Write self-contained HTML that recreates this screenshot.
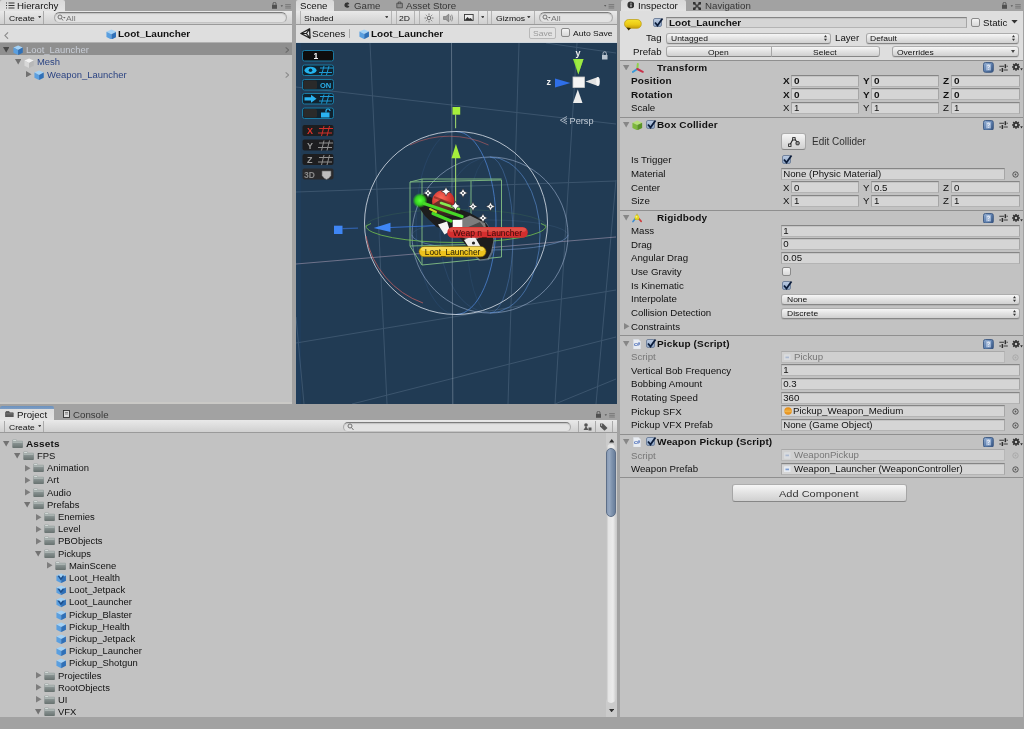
<!DOCTYPE html><html><head><meta charset="utf-8"><title>Unity</title><style>
*{box-sizing:border-box;margin:0;padding:0}
html,body{width:1024px;height:729px;overflow:hidden;background:#a2a2a2;-webkit-font-smoothing:antialiased;font-family:"Liberation Sans",sans-serif;font-size:9.7px;color:#111}
.abs{position:absolute}
.t{position:absolute;white-space:nowrap;line-height:12px;height:12px;transform:scaleY(.9);transform-origin:0 50%;color:#111}
.b{font-weight:bold;font-size:10px;letter-spacing:.15px}
.panel{position:absolute;background:#c2c2c2}
.tabbar{position:absolute;background:#a2a2a2}
.tab{position:absolute;background:linear-gradient(#d9d9d9,#e2e2e2);border-top-left-radius:2px;border-top-right-radius:2px}
.tbar{position:absolute;background:linear-gradient(#e9e9e9,#d0d0d0);border-bottom:1px solid #9a9a9a}
.fld{position:absolute;background:#d5d5d5;border:1px solid #a6a6a6;border-top-color:#858585;border-bottom-color:#b4b4b4;height:12.4px;box-shadow:inset 0 1px 0 #c4c4c4}
.fld.dis{background:#d0d0d0;border-color:#b7b7b7;border-top-color:#a9a9a9;box-shadow:none}
.dd{position:absolute;background:linear-gradient(#f6f6f6,#e4e4e4 45%,#d0d0d0);border:1px solid #a6a6a6;border-top-color:#adadad;border-bottom-color:#868686;border-radius:3px;height:11px;box-shadow:0 1px 0 rgba(0,0,0,.08)}
.btn{position:absolute;background:linear-gradient(#f6f6f6,#e4e4e4 45%,#d0d0d0);border:1px solid #a6a6a6;border-top-color:#adadad;border-bottom-color:#868686;border-radius:3px}
.sep{position:absolute;left:620px;width:403px;height:1px;background:#8f8f8f}
.cb{position:absolute;width:9px;height:9px;border:1px solid #8a8a8a;border-radius:2px;background:linear-gradient(#f4f4f4,#d8d8d8)}
.cb.on{background:linear-gradient(#b9c9e0,#8fa7c8);border-color:#72839d}
.nb{letter-spacing:0}
.s{font-size:8.6px}
.tr{font-size:9.45px}
.gray{color:#777}
.blue{color:#2b4382}
</style></head><body><div id="root" style="position:absolute;left:0;top:0;width:1024px;height:729px;will-change:transform">
<svg width="0" height="0" style="position:absolute"><defs><linearGradient id="hb" x1="0" y1="0" x2="1" y2="1"><stop offset="0" stop-color="#9ab4d6"/><stop offset="0.5" stop-color="#5d7fae"/><stop offset="1" stop-color="#34527f"/></linearGradient><linearGradient id="fg" x1="0" y1="0" x2="0" y2="1"><stop offset="0" stop-color="#9ea7a5"/><stop offset="0.45" stop-color="#879190"/><stop offset="1" stop-color="#687270"/></linearGradient></defs></svg>
<div class="panel" style="left:0;top:0;width:292px;height:404px"></div>
<div class="tabbar" style="left:0;top:0;width:292px;height:11px"></div>
<div class="tab" style="left:0;top:0;width:65px;height:11px"></div>
<svg class="abs" style="left:6px;top:2px" width="9" height="7" viewBox="0 0 9 7"><path d="M0 1h1M2.5 1h6M0 3.5h1M2.5 3.5h6M0 6h1M2.5 6h6" stroke="#333" stroke-width="1"/></svg>
<div class="t " style="left:17px;top:-0.5px;">Hierarchy</div>
<div class="tbar" style="left:0;top:11px;width:292px;height:14px"></div>
<div class="abs" style="left:4px;top:11px;width:1px;height:13px;background:#aaa"></div>
<div class="abs" style="left:43px;top:11px;width:1px;height:13px;background:#aaa"></div>
<div class="t s" style="left:9px;top:12px;">Create</div>
<svg class="abs" style="left:37.8px;top:15.8px" width="3.4" height="2.4" viewBox="0 0 4 3"><path d="M0 0L4 0L2 3Z" fill="#444"/></svg>
<div class="abs" style="left:53.5px;top:12px;width:233.5px;height:10.6px;border:1px solid #a9a9a9;border-top-color:#7c7c7c;border-bottom-color:#c4c4c4;border-radius:5.5px;background:#e2e2e2;box-shadow:inset 0 1px 1px #c2c2c2"></div>
<div class="t gray s" style="left:66px;top:12px;">All</div>
<svg class="abs" style="left:57px;top:14px" width="9" height="8" viewBox="0 0 9 8"><circle cx="3" cy="3" r="2" fill="none" stroke="#666" stroke-width="0.9"/><path d="M4.5 4.5L6 6.5" stroke="#666" stroke-width="0.9"/><path d="M6 3L8.6 3L7.3 4.6Z" fill="#666"/></svg>
<div class="abs" style="left:0;top:25px;width:292px;height:18px;background:#dedede;border-bottom:1px solid #b0b0b0"></div>
<svg class="abs" style="left:4.2px;top:31.5px" width="4.5" height="7.2" viewBox="0 0 5 8"><path d="M4.5 0.5L1 4L4.5 7.5" fill="none" stroke="#8a8a8a" stroke-width="1.2"/></svg>
<svg class="abs" style="left:105.7px;top:28.6px" width="10.8" height="10.8" viewBox="0 0 12 12"><path d="M6 0.5 L11.5 3 L6 5.8 L0.5 3 Z" fill="#a4d2f6"/><path d="M0.5 3 L6 5.8 L6 11.7 L0.5 9 Z" fill="#5a9fe0"/><path d="M11.5 3 L6 5.8 L6 11.7 L11.5 9 Z" fill="#2f70b8"/></svg>
<div class="t b nb" style="left:118px;top:28px;">Loot_Launcher</div>
<div class="abs" style="left:0;top:43px;width:292px;height:12px;background:#8f8f8f"></div>
<svg class="abs" style="left:3px;top:47.4px" width="6.4" height="5.5" viewBox="0 0 7 6"><path d="M0 0 L7 0 L3.5 6 Z" fill="#484848"/></svg>
<svg class="abs" style="left:13.2px;top:45.4px" width="10.2" height="10.2" viewBox="0 0 12 12"><path d="M6 0.5 L11.5 3 L6 5.8 L0.5 3 Z" fill="#a4d2f6"/><path d="M0.5 3 L6 5.8 L6 11.7 L0.5 9 Z" fill="#5a9fe0"/><path d="M11.5 3 L6 5.8 L6 11.7 L11.5 9 Z" fill="#2f70b8"/></svg>
<div class="t tr" style="left:26px;top:43.5px;color:#c8cdd6">Loot_Launcher</div>
<svg class="abs" style="left:284.5px;top:46.8px" width="4.4" height="6" viewBox="0 0 5 7"><path d="M0.7 0.5L4.2 3.5L0.7 6.5" fill="none" stroke="#6a6a6a" stroke-width="1.3"/></svg>
<svg class="abs" style="left:14.6px;top:59.3px" width="6.4" height="5.5" viewBox="0 0 7 6"><path d="M0 0 L7 0 L3.5 6 Z" fill="#707070"/></svg>
<svg class="abs" style="left:23.8px;top:57.5px" width="10.2" height="10.2" viewBox="0 0 12 12"><path d="M6 0.5 L11.5 3 L6 5.8 L0.5 3 Z" fill="#f2f2f2"/><path d="M0.5 3 L6 5.8 L6 11.7 L0.5 9 Z" fill="#d8d8d8"/><path d="M11.5 3 L6 5.8 L6 11.7 L11.5 9 Z" fill="#b8b8b8"/></svg>
<div class="t blue tr" style="left:37px;top:56px;">Mesh</div>
<svg class="abs" style="left:26px;top:71px" width="5.5" height="6.4" viewBox="0 0 6 7"><path d="M0 0 L6 3.5 L0 7 Z" fill="#707070"/></svg>
<svg class="abs" style="left:34.2px;top:69.6px" width="10.2" height="10.2" viewBox="0 0 12 12"><path d="M6 0.5 L11.5 3 L6 5.8 L0.5 3 Z" fill="#a4d2f6"/><path d="M0.5 3 L6 5.8 L6 11.7 L0.5 9 Z" fill="#5a9fe0"/><path d="M11.5 3 L6 5.8 L6 11.7 L11.5 9 Z" fill="#2f70b8"/></svg>
<div class="t blue tr" style="left:47px;top:68.5px;">Weapon_Launcher</div>
<svg class="abs" style="left:284.5px;top:71.5px" width="4.4" height="6" viewBox="0 0 5 7"><path d="M0.7 0.5L4.2 3.5L0.7 6.5" fill="none" stroke="#8c8c8c" stroke-width="1.3"/></svg>
<svg class="abs" style="left:272px;top:1.8px" width="19" height="7" viewBox="0 0 19 7"><rect x="0" y="2.8" width="5" height="4" fill="#505050"/><path d="M1 2.8V1.8a1.5 1.5 0 0 1 3 0V2.8" fill="none" stroke="#505050" stroke-width="0.9"/><path d="M8.6 3.2L11 3.2L9.8 4.9Z" fill="#5a5a5a"/><path d="M13.2 2.6h5.6M13.2 4.3h5.6M13.2 6h5.6" stroke="#747474" stroke-width="0.9"/></svg>
<div class="abs" style="left:0;top:402px;width:292px;height:2px;background:#cac9c6"></div>
<div class="panel" style="left:296px;top:0;width:321px;height:404px"></div>
<div class="tabbar" style="left:292px;top:0;width:328px;height:11px"></div>
<div class="tab" style="left:296px;top:0;width:38px;height:11px"></div>
<div class="t " style="left:300px;top:-0.5px;">Scene</div>
<div class="t " style="left:354px;top:-0.5px;color:#363636">Game</div>
<svg class="abs" style="left:344.2px;top:2.2px" width="6" height="6" viewBox="0 0 8 8"><path d="M4 0.5a3.5 3.5 0 1 0 3.2 5L4 4L7.2 2.5A3.5 3.5 0 0 0 4 0.5Z" fill="#333"/></svg>
<svg class="abs" style="left:395.6px;top:1.4px" width="7.2" height="7.2" viewBox="0 0 9 9"><path d="M1 2.8h7v5.7h-7z" fill="#8e8e8e" stroke="#505050" stroke-width="1.1"/><path d="M3 4V1.2h3V4" fill="none" stroke="#505050" stroke-width="1.1"/></svg>
<div class="t " style="left:406px;top:-0.5px;color:#363636">Asset Store</div>
<svg class="abs" style="left:603.6px;top:3.6px" width="11" height="5" viewBox="0 0 11 5"><path d="M0 1L2.4 1L1.2 2.7Z" fill="#5a5a5a"/><path d="M4.6 0.6h5.6M4.6 2.300h5.6M4.6 4h5.6" stroke="#747474" stroke-width="0.9"/></svg>
<div class="tbar" style="left:296px;top:11px;width:321px;height:14px"></div>
<div class="t s" style="left:304px;top:12px;">Shaded</div>
<svg class="abs" style="left:384.8px;top:15.6px" width="3.6" height="2.6" viewBox="0 0 4 3"><path d="M0 0L4 0L2 3Z" fill="#444"/></svg>
<div class="abs" style="left:300px;top:11px;width:1px;height:13px;background:#b4b4b4"></div>
<div class="abs" style="left:390.8px;top:11px;width:1px;height:13px;background:#b4b4b4"></div>
<div class="abs" style="left:395.5px;top:11px;width:1px;height:13px;background:#b4b4b4"></div>
<div class="abs" style="left:414px;top:11px;width:1px;height:13px;background:#b4b4b4"></div>
<div class="abs" style="left:419px;top:11px;width:1px;height:13px;background:#b4b4b4"></div>
<div class="abs" style="left:438.5px;top:11px;width:1px;height:13px;background:#b4b4b4"></div>
<div class="abs" style="left:458px;top:11px;width:1px;height:13px;background:#b4b4b4"></div>
<div class="abs" style="left:478px;top:11px;width:1px;height:13px;background:#b4b4b4"></div>
<div class="abs" style="left:486.5px;top:11px;width:1px;height:13px;background:#b4b4b4"></div>
<div class="abs" style="left:491px;top:11px;width:1px;height:13px;background:#b4b4b4"></div>
<div class="abs" style="left:534px;top:11px;width:1px;height:13px;background:#b4b4b4"></div>
<div class="t s" style="left:399px;top:12px;">2D</div>
<svg class="abs" style="left:424px;top:13.3px" width="10" height="10" viewBox="0 0 10 10"><circle cx="5" cy="5" r="1.8" fill="none" stroke="#555" stroke-width="0.9"/><path d="M5 0.5V2M5 8V9.5M0.5 5H2M8 5H9.5M1.8 1.8L2.8 2.8M7.2 7.2L8.2 8.2M1.8 8.2L2.8 7.2M7.2 2.8L8.2 1.8" stroke="#666" stroke-width="0.8"/></svg>
<svg class="abs" style="left:443px;top:13.3px" width="11.5" height="10" viewBox="0 0 12 10"><path d="M0.5 3.5H3L6 1V9L3 6.5H0.5Z" fill="#999" stroke="#666" stroke-width="0.6"/><path d="M7.5 2.5Q9 5 7.5 7.5M9 1.5Q11.2 5 9 8.5" fill="none" stroke="#777" stroke-width="0.8"/></svg>
<svg class="abs" style="left:464.3px;top:14.3px" width="9.6" height="7" viewBox="0 0 11 8"><rect x="0.5" y="0.5" width="10" height="7" fill="#eee" stroke="#333" stroke-width="1"/><path d="M1 7L4 3.5L6 5.5L7.5 4.5L10 7Z" fill="#333"/></svg>
<svg class="abs" style="left:480.8px;top:15.6px" width="3.6" height="2.6" viewBox="0 0 4 3"><path d="M0 0L4 0L2 3Z" fill="#444"/></svg>
<div class="t s" style="left:496px;top:12px;">Gizmos</div>
<svg class="abs" style="left:527.2px;top:15.6px" width="3.6" height="2.6" viewBox="0 0 4 3"><path d="M0 0L4 0L2 3Z" fill="#444"/></svg>
<div class="abs" style="left:538.5px;top:12px;width:74px;height:10.6px;border:1px solid #a9a9a9;border-top-color:#7c7c7c;border-bottom-color:#c4c4c4;border-radius:5.5px;background:#e2e2e2;box-shadow:inset 0 1px 1px #c2c2c2"></div>
<svg class="abs" style="left:542px;top:14px" width="9" height="8" viewBox="0 0 9 8"><circle cx="3" cy="3" r="2" fill="none" stroke="#666" stroke-width="0.9"/><path d="M4.5 4.5L6 6.5" stroke="#666" stroke-width="0.9"/><path d="M6 3L8.6 3L7.3 4.6Z" fill="#666"/></svg>
<div class="t gray s" style="left:551px;top:12px;">All</div>
<div class="abs" style="left:296px;top:25px;width:321px;height:18px;background:#dedede;border-bottom:1px solid #cfd6dc"></div>
<svg class="abs" style="left:299.8px;top:28.2px" width="11" height="11" viewBox="0 0 11 11"><path d="M0.9 5.5L9.6 0.9L10 10.1Z" fill="#e8e8e8" stroke="#1e1e1e" stroke-width="1.3" stroke-linejoin="round"/><path d="M6.4 5.5L0.9 5.5M6.4 5.5L9.6 0.9M6.4 5.5L10 10.1" stroke="#1e1e1e" stroke-width="1.2"/></svg>
<div class="t " style="left:312px;top:28px;font-size:10px">Scenes</div>
<div class="abs" style="left:349px;top:29px;width:1px;height:9px;background:#aaa"></div>
<svg class="abs" style="left:358.8px;top:28.8px" width="10.4" height="10.4" viewBox="0 0 12 12"><path d="M6 0.5 L11.5 3 L6 5.8 L0.5 3 Z" fill="#a4d2f6"/><path d="M0.5 3 L6 5.8 L6 11.7 L0.5 9 Z" fill="#5a9fe0"/><path d="M11.5 3 L6 5.8 L6 11.7 L11.5 9 Z" fill="#2f70b8"/></svg>
<div class="t b nb" style="left:371px;top:28px;">Loot_Launcher</div>
<div class="abs" style="left:529px;top:27px;width:27px;height:12px;border:1px solid #b8b8b8;border-radius:2px;background:#e2e2e2"></div>
<div class="t s" style="left:533px;top:27px;color:#9a9a9a">Save</div>
<div class="cb" style="left:561.4px;top:28.3px;width:8.8px;height:8.8px"></div>
<div class="t s" style="left:573px;top:27px;">Auto Save</div>
<svg class="abs" style="left:296px;top:43px" width="321" height="361" viewBox="296 43 321 361">
<defs>
<clipPath id="sc"><rect x="296" y="43" width="321" height="361"/></clipPath>
<radialGradient id="rg" cx="40%" cy="35%" r="70%"><stop offset="0" stop-color="#ff6a5a"/><stop offset="1" stop-color="#b81818"/></radialGradient>
<radialGradient id="gg" cx="50%" cy="50%" r="50%"><stop offset="0" stop-color="#5cff3a"/><stop offset="0.6" stop-color="#34d21e"/><stop offset="1" stop-color="#34d21e" stop-opacity="0"/></radialGradient>
<path id="star" d="M0 -4.6L1.5 -1.5L4.6 0L1.5 1.5L0 4.600L-1.5 1.5L-4.6 0L-1.5 -1.5Z"/>
</defs>
<g clip-path="url(#sc)">
<rect x="296" y="43" width="321" height="361" fill="#213b54"/>
<rect x="296" y="43" width="5" height="361" fill="#1f3f60" opacity=".6"/>
<!-- grid -->
<g stroke="#8aa0b8" stroke-width="1" fill="none" opacity=".25">
<path d="M370 43L387 404"/>
<path d="M519 43L508 404"/>
<path d="M577 43L555 404"/>
<path d="M616 180L596 404"/>
<path d="M296 317L304 404"/>
<path d="M296 87L616 124"/>
<path d="M546 43L616 53"/>
<path d="M296 192L616 181"/>
<path d="M296 343L616 290"/>
<path d="M352 404L616 337"/>
<path d="M555 404L616 379"/>
</g>
<path d="M451.5 43L452.800 404" stroke="#b8c4d2" stroke-width="1" opacity=".36"/>
<path d="M296 264L616 237" stroke="#b9a8c0" stroke-width="1" opacity=".5"/>
<!-- spheres -->
<g fill="none" stroke-width="1">
<circle cx="490" cy="235" r="78" stroke="#a9bcd8" opacity=".55"/>
<path d="M490 157A50 78 0 0 1 490 313" stroke="#5b8fd6" opacity=".6"/>
<path d="M490 157A50 78 0 0 0 490 313" stroke="#5b8fd6" opacity=".15"/>
<path d="M490 157A23 78 0 0 1 490 313" stroke="#5b8fd6" opacity=".38"/>
<path d="M490 157A23 78 0 0 0 490 313" stroke="#5b8fd6" opacity=".1"/>
<path d="M412 235A78 15 0 0 0 568 235" stroke="#7ea2d8" opacity=".5"/>
<path d="M412 235A78 15 0 0 1 568 235" stroke="#7ea2d8" opacity=".12"/>
<path d="M456 131.5A40 91.5 0 0 1 456 314.5" stroke="#4d86d8" opacity=".75"/>
<path d="M456 131.5A40 91.5 0 0 0 456 314.5" stroke="#4d86d8" opacity=".13"/>
<circle cx="456" cy="223" r="91.5" stroke="#dfe5ee" opacity=".78"/>
<path d="M366 226A90 16.5 0 0 0 546 226" stroke="#74c24e" opacity=".8"/><path d="M366 226L371 223.5M546 226L541 223.5" stroke="#74c24e" opacity=".8"/><path d="M366 226A90 16.5 0 0 1 546 226" stroke="#74c24e" opacity=".12"/>
<path d="M366 236A88 88 0 0 0 423 303" stroke="#d06060" opacity=".7"/>
<path d="M410 145A92 92 0 0 1 488.5 145" stroke="#d06060" opacity=".55"/>
</g>
<!-- box collider -->
<g fill="none" stroke="#8fd08a" stroke-width="1" opacity=".8">
<path d="M410 182L501.5 180L501.5 257L422 265L410 246Z"/>
<path d="M422 179L501.5 179M422 179L422 265M471 181L471 247M410 246L471 244.5M410 182L422 179"/>
</g>
<!-- Y axis -->
<path d="M455.6 114.5L455.6 128.3M455.6 158L455.6 226" stroke="#a8e070" stroke-width="1.1" opacity=".9"/>
<path d="M455.9 144L460.6 158.3L451.5 158.3Z" fill="#a6ee3c"/>
<rect x="452.5" y="107" width="7.7" height="7.7" fill="#a6ee3c"/>
<!-- Z axis -->
<path d="M342.5 228.6L358 228.2" stroke="#3a78e0" stroke-width="1.2" opacity=".6"/>
<path d="M390 227.5L456 224.8" stroke="#3a78e0" stroke-width="1" opacity=".8"/>
<path d="M373.7 228L390.5 222.8L390.5 232Z" fill="#3f86f5"/>
<rect x="334" y="225.7" width="8.5" height="8.3" fill="#3f86f5"/>
<!-- gun model -->
<g>
<path d="M462 232L486 222L495 236L493 252L489 260L479 261L468 249Z" fill="#8e96a0" opacity=".55"/>
<path d="M416 199L424 194L448 205L470 213L484 221L491 230L493.5 240L491 252L487.5 258.5L480 259.5L470 250L461 239L449 232L436 226.5L425 216L418 206Z" fill="#1d1d1d"/>
<path d="M455 222L470 215.5L485 223L487 233L472 242L460 236Z" fill="#7d7d7d"/>
<path d="M466 228L480 222L486 230L474 238Z" fill="#4a4a4a"/>
<path d="M464 240L474 235.5L482 249L473 254Z" fill="#f0f0f0"/>
<circle cx="473.5" cy="243" r="1.6" fill="#222"/>
<path d="M438 224.5L447 221.5L450 231L444.5 234.5Z" fill="#f4f4f4"/>
<circle cx="443.3" cy="201.5" r="11.2" fill="url(#rg)"/>
<path d="M432 205L441 199L456 207L456 216L438 216Z" fill="#3a2a22" opacity=".75"/>
<path d="M434 197L452 204" stroke="#7a2a1c" stroke-width="2" opacity=".6"/>
<circle cx="420" cy="200.5" r="7.5" fill="url(#gg)"/>
<path d="M424 203.5L462 216.5" stroke="#46d828" stroke-width="3.4" stroke-linecap="round"/>
<path d="M441 203L459 209" stroke="#86ea50" stroke-width="2.6" stroke-linecap="round"/>
<path d="M433 213.5L451 221" stroke="#46d828" stroke-width="3.2" stroke-linecap="round"/>
<path d="M430 209L436 212" stroke="#c8d820" stroke-width="2" stroke-linecap="round"/>
</g>
<g fill="#fff" stroke="#20242a" stroke-width=".6">
<use href="#star" x="428" y="193"/><use href="#star" x="446" y="191.5"/><use href="#star" x="463" y="193"/>
<use href="#star" x="473" y="206.5"/><use href="#star" x="490.5" y="206.5"/><use href="#star" x="483" y="218"/><use href="#star" x="455.5" y="206"/>
</g>
<g fill="#3a4048"><circle cx="428" cy="193" r=".9"/><circle cx="463" cy="193" r=".9"/><circle cx="473" cy="206.5" r=".9"/><circle cx="490.5" cy="206.5" r=".9"/><circle cx="483" cy="218" r=".9"/></g>
<rect x="452.7" y="219.8" width="9.6" height="9.5" fill="#fbfbfb"/>
<!-- labels -->
<rect x="447.3" y="227" width="80.5" height="10.7" rx="5.3" fill="#d42e2e"/>
<rect x="449" y="227.6" width="77" height="4.2" rx="3" fill="#f07060" opacity=".5"/>
<text x="453" y="235.5" font-family="Liberation Sans" font-size="8.8" fill="#3c0a0a" textLength="69" lengthAdjust="spacingAndGlyphs">Weap&#160;n_Launcher</text>
<rect x="419" y="246.4" width="67" height="10.4" rx="5.2" fill="#edc21c" stroke="#8a6a08" stroke-width=".6"/>
<rect x="421" y="247" width="63" height="4" rx="3" fill="#fbe670" opacity=".7"/>
<text x="424.8" y="254.7" font-family="Liberation Sans" font-size="8.8" fill="#2a2206" textLength="55.5" lengthAdjust="spacingAndGlyphs">Loot_Launcher</text>
<!-- orientation gizmo -->
<path d="M573 59L583.5 59L578.3 74.5Z" fill="#8ee23a"/>
<path d="M575 59L583.5 59L578.3 74.5Z" fill="#a8f04a" opacity=".6"/>
<path d="M555 78.5L555 87.5L570.5 83Z" fill="#2f6fe8"/>
<path d="M598 77L598 86L585.5 81.5Z" fill="#e2e2e2"/>
<ellipse cx="598" cy="81.5" rx="1.8" ry="4.5" fill="#f6f6f6"/>
<path d="M573 103L582.5 103L577.8 89.5Z" fill="#ececec"/>
<rect x="573" y="77" width="11.5" height="10.5" fill="#f4f4f4"/>
<rect x="573" y="77" width="11.5" height="10.5" fill="none" stroke="#c9c9c9" stroke-width=".8"/>
<text x="575.5" y="56" font-family="Liberation Sans" font-size="9" font-weight="bold" fill="#f0f0f0">y</text>
<text x="546.5" y="85" font-family="Liberation Sans" font-size="9" font-weight="bold" fill="#f0f0f0">z</text>
<g fill="#b9c4d0"><rect x="602" y="55" width="5.5" height="4.5"/><path d="M603 55V53.5a1.7 1.7 0 0 1 3.4 0V55" fill="none" stroke="#b9c4d0" stroke-width=".9"/></g>
<path d="M567 116.5L560.3 120.2L567 124M567 118.6L563.6 120.2L567 121.8" fill="none" stroke="#aeb9c6" stroke-width=".9"/>
<text x="569.5" y="124" font-family="Liberation Sans" font-size="9.5" fill="#c3ccd6" textLength="24" lengthAdjust="spacingAndGlyphs">Persp</text>
<!-- progrids -->
<g font-family="Liberation Sans" font-weight="bold" font-size="8.5">
<rect x="302.5" y="50.5" width="31" height="10.5" rx="2" fill="#0e0e0e" stroke="#1a7aa3" stroke-width="1"/>
<text x="313.6" y="59" fill="#f4f4f4" font-size="8.5">1</text>
<rect x="302.5" y="65" width="31" height="10.5" rx="2" fill="#10222e" stroke="#1a7aa3" stroke-width="1"/>
<ellipse cx="310.5" cy="70.3" rx="6" ry="3.6" fill="#23b3ee"/><circle cx="310.5" cy="70.3" r="1.8" fill="#0c2a3a"/>
<path d="M320 68H333M319 72.5H332M324 66L321.5 75M329 66L326.5 75" stroke="#1e9bd6" stroke-width="1"/>
<rect x="302.5" y="79.5" width="31" height="10.5" rx="2" fill="#10222e" stroke="#1a7aa3" stroke-width="1"/>
<rect x="303.5" y="80.5" width="13.5" height="8.5" rx="1.5" fill="#2a2a2a"/>
<text x="320" y="88" fill="#2ab0ea" font-size="7.5">ON</text>
<rect x="302.5" y="93.5" width="31" height="10.5" rx="2" fill="#10222e" stroke="#1a7aa3" stroke-width="1"/>
<path d="M304.5 97.2H311V94.8L316.5 98.8L311 102.8V100.4H304.5Z" fill="#2ab4f2"/>
<path d="M320 96.5H333M319 101H332M324 94.5L321.5 103.5M329 94.5L326.5 103.5" stroke="#1e9bd6" stroke-width="1"/>
<rect x="302.5" y="108" width="31" height="10.5" rx="2" fill="#10222e" stroke="#1a7aa3" stroke-width="1"/>
<rect x="303.5" y="109" width="13.5" height="8.5" rx="1.5" fill="#2a2a2a"/>
<rect x="321" y="112.5" width="8.5" height="5" fill="#2ab4f2"/><path d="M326 112.5V111a2 2 0 0 1 4 0" fill="none" stroke="#2ab4f2" stroke-width="1.2"/>
<rect x="302.5" y="125" width="31" height="11" rx="2" fill="#1d1d1f"/>
<text x="307" y="134" fill="#e0342c" font-size="9">X</text>
<path d="M319 128.5H333M318 133H332M324 126L321.5 136M329.5 126L327 136" stroke="#d0302a" stroke-width="1"/>
<rect x="302.5" y="139.5" width="31" height="11" rx="2" fill="#1d1d1f"/>
<text x="307" y="148.5" fill="#9a9a9a" font-size="9">Y</text>
<path d="M319 143H333M318 147.5H332M324 140.5L321.5 150.5M329.5 140.5L327 150.5" stroke="#8e8e8e" stroke-width="1"/>
<rect x="302.5" y="154" width="31" height="11" rx="2" fill="#1d1d1f"/>
<text x="307" y="163" fill="#9a9a9a" font-size="9">Z</text>
<path d="M319 157.5H333M318 162H332M324 155L321.5 165M329.5 155L327 165" stroke="#8e8e8e" stroke-width="1"/>
<rect x="302.5" y="168.5" width="31" height="11" rx="2" fill="#2a2a2c"/>
<text x="304" y="177.5" fill="#8a8a8a" font-size="8.5">3D</text>
<path d="M322 171H331V175.5Q329 179 326.5 179.5Q324 179 322 175.5Z" fill="#bdbdbd" stroke="#6a6a6a" stroke-width=".6"/>
</g>
</g>
</svg>

<div class="panel" style="left:0;top:404px;width:617px;height:313px"></div>
<div class="tabbar" style="left:0;top:404px;width:620px;height:16px"></div>
<div class="tab" style="left:0;top:405.5px;width:54px;height:14.5px;background:linear-gradient(#6c91bd 0,#7a9cc4 2.6px,#dddddd 3.2px,#e3e3e3 100%)"></div>
<svg class="abs" style="left:5.2px;top:410.6px" width="8.8" height="6.8" viewBox="0 0 10 8"><path d="M0.5 1.5V7.5H9.5V2.2H5.4L4.6 0.6H1.2Z" fill="#5a5a5a" stroke="#4a4a4a" stroke-width="0.8"/><path d="M1 3.3H9" stroke="#8a8a8a" stroke-width="0.7"/></svg>
<div class="t " style="left:17px;top:408.5px;">Project</div>
<svg class="abs" style="left:63px;top:410px" width="7" height="8" viewBox="0 0 7 8"><rect x="0.5" y="0.5" width="6" height="7" fill="#ddd" stroke="#333" stroke-width="0.9"/><path d="M2 2.5h3M2 4h3" stroke="#666" stroke-width="0.7"/></svg>
<div class="t " style="left:73px;top:408.5px;color:#363636">Console</div>
<div class="tbar" style="left:0;top:420px;width:617px;height:13px"></div>
<div class="abs" style="left:4px;top:421px;width:1px;height:11px;background:#aaa"></div>
<div class="abs" style="left:43px;top:421px;width:1px;height:11px;background:#aaa"></div>
<div class="t s" style="left:9px;top:421px;">Create</div>
<svg class="abs" style="left:37.8px;top:424.8px" width="3.4" height="2.4" viewBox="0 0 4 3"><path d="M0 0L4 0L2 3Z" fill="#444"/></svg>
<div class="abs" style="left:343px;top:421.6px;width:227.5px;height:10.4px;border:1px solid #a9a9a9;border-top-color:#7c7c7c;border-bottom-color:#c4c4c4;border-radius:5.5px;background:#e2e2e2;box-shadow:inset 0 1px 1px #c2c2c2"></div>
<svg class="abs" style="left:347px;top:423px" width="8" height="8" viewBox="0 0 8 8"><circle cx="3" cy="3" r="2" fill="none" stroke="#666" stroke-width="0.9"/><path d="M4.5 4.5L6.5 7" stroke="#666" stroke-width="0.9"/></svg>
<div class="abs" style="left:578px;top:421px;width:1px;height:11px;background:#aaa"></div>
<div class="abs" style="left:595px;top:421px;width:1px;height:11px;background:#aaa"></div>
<div class="abs" style="left:612px;top:421px;width:1px;height:11px;background:#aaa"></div>
<svg class="abs" style="left:583px;top:423px" width="9" height="8" viewBox="0 0 9 8"><circle cx="3" cy="2" r="1.8" fill="#555"/><path d="M0.5 7L3 3L5.5 7Z" fill="#555"/><rect x="5.5" y="4.5" width="3" height="3" fill="#555"/></svg>
<svg class="abs" style="left:599px;top:423px" width="9" height="8" viewBox="0 0 9 8"><path d="M1 0.5H4L8.5 5L5.5 7.8L1 3.5Z" fill="#555"/><circle cx="2.5" cy="2" r="0.7" fill="#ddd"/></svg>
<svg class="abs" style="left:595.5px;top:410.8px" width="19" height="7" viewBox="0 0 19 7"><rect x="0" y="2.8" width="5" height="4" fill="#505050"/><path d="M1 2.8V1.8a1.5 1.5 0 0 1 3 0V2.8" fill="none" stroke="#505050" stroke-width="0.9"/><path d="M8.6 3.2L11 3.2L9.8 4.9Z" fill="#5a5a5a"/><path d="M13.2 2.6h5.6M13.2 4.3h5.6M13.2 6h5.6" stroke="#747474" stroke-width="0.9"/></svg>
<div class="abs" style="left:606px;top:433px;width:11px;height:284px;background:#cbcbcb"></div>
<div class="abs" style="left:605.6px;top:444px;width:10.6px;height:259px;border-radius:5.3px;background:linear-gradient(90deg,#bcbcbc,#e4e4e4 25%,#ececec 70%,#cdcdcd)"></div>
<svg class="abs" style="left:608.5px;top:439.3px" width="5.6" height="3.6" viewBox="0 0 6 4"><path d="M0 4L6 4L3 0Z" fill="#2e2e2e"/></svg>
<svg class="abs" style="left:608.5px;top:708.5px" width="5.2" height="3.4" viewBox="0 0 6 4"><path d="M0 0L6 0L3 4Z" fill="#2e2e2e"/></svg>
<div class="abs" style="left:605.6px;top:447.5px;width:10.4px;height:69.5px;border-radius:5.2px;border:1px solid #5d6e87;background:linear-gradient(90deg,#8a9cb6,#95a7c0 30%,#8094ae 60%,#697e9b)"></div>
<svg class="abs" style="left:3.2px;top:441.3px" width="6.4" height="5.5" viewBox="0 0 7 6"><path d="M0 0 L7 0 L3.5 6 Z" fill="#727272"/></svg>
<svg class="abs" style="left:12.1px;top:439.3px" width="11.3" height="9.4" viewBox="0 0 12 10"><path d="M0.3 1.6Q0.3 0.6 1.3 0.6H4.6L5.6 1.8H10.8Q11.6 1.8 11.6 2.6V8.6Q11.6 9.5 10.8 9.5H1.2Q0.3 9.5 0.3 8.6Z" fill="url(#fg)"/><path d="M1.2 1.2H4.3L5 2.2H1.2Z" fill="#e6ebea"/><path d="M0.8 3.3H11.1" stroke="#c7cfcd" stroke-width="0.9"/></svg>
<div class="t b" style="left:26px;top:437.8px;">Assets</div>
<svg class="abs" style="left:14.2px;top:453.3px" width="6.4" height="5.5" viewBox="0 0 7 6"><path d="M0 0 L7 0 L3.5 6 Z" fill="#727272"/></svg>
<svg class="abs" style="left:23.1px;top:451.3px" width="11.3" height="9.4" viewBox="0 0 12 10"><path d="M0.3 1.6Q0.3 0.6 1.3 0.6H4.6L5.6 1.8H10.8Q11.6 1.8 11.6 2.6V8.6Q11.6 9.5 10.8 9.5H1.2Q0.3 9.5 0.3 8.6Z" fill="url(#fg)"/><path d="M1.2 1.2H4.3L5 2.2H1.2Z" fill="#e6ebea"/><path d="M0.8 3.3H11.1" stroke="#c7cfcd" stroke-width="0.9"/></svg>
<div class="t tr" style="left:37px;top:450.0px;">FPS</div>
<svg class="abs" style="left:25.2px;top:465.3px" width="5.5" height="6.4" viewBox="0 0 6 7"><path d="M0 0 L6 3.5 L0 7 Z" fill="#7d7d7d"/></svg>
<svg class="abs" style="left:33.1px;top:463.3px" width="11.3" height="9.4" viewBox="0 0 12 10"><path d="M0.3 1.6Q0.3 0.6 1.3 0.6H4.6L5.6 1.8H10.8Q11.6 1.8 11.6 2.6V8.6Q11.6 9.5 10.8 9.5H1.2Q0.3 9.5 0.3 8.6Z" fill="url(#fg)"/><path d="M1.2 1.2H4.3L5 2.2H1.2Z" fill="#e6ebea"/><path d="M0.8 3.3H11.1" stroke="#c7cfcd" stroke-width="0.9"/></svg>
<div class="t tr" style="left:47px;top:462.2px;">Animation</div>
<svg class="abs" style="left:25.2px;top:477.3px" width="5.5" height="6.4" viewBox="0 0 6 7"><path d="M0 0 L6 3.5 L0 7 Z" fill="#7d7d7d"/></svg>
<svg class="abs" style="left:33.1px;top:475.3px" width="11.3" height="9.4" viewBox="0 0 12 10"><path d="M0.3 1.6Q0.3 0.6 1.3 0.6H4.6L5.6 1.8H10.8Q11.6 1.8 11.6 2.6V8.6Q11.6 9.5 10.8 9.5H1.2Q0.3 9.5 0.3 8.6Z" fill="url(#fg)"/><path d="M1.2 1.2H4.3L5 2.2H1.2Z" fill="#e6ebea"/><path d="M0.8 3.3H11.1" stroke="#c7cfcd" stroke-width="0.9"/></svg>
<div class="t tr" style="left:47px;top:474.4px;">Art</div>
<svg class="abs" style="left:25.2px;top:489.3px" width="5.5" height="6.4" viewBox="0 0 6 7"><path d="M0 0 L6 3.5 L0 7 Z" fill="#7d7d7d"/></svg>
<svg class="abs" style="left:33.1px;top:488.3px" width="11.3" height="9.4" viewBox="0 0 12 10"><path d="M0.3 1.6Q0.3 0.6 1.3 0.6H4.6L5.6 1.8H10.8Q11.6 1.8 11.6 2.6V8.6Q11.6 9.5 10.8 9.5H1.2Q0.3 9.5 0.3 8.6Z" fill="url(#fg)"/><path d="M1.2 1.2H4.3L5 2.2H1.2Z" fill="#e6ebea"/><path d="M0.8 3.3H11.1" stroke="#c7cfcd" stroke-width="0.9"/></svg>
<div class="t tr" style="left:47px;top:486.6px;">Audio</div>
<svg class="abs" style="left:24.2px;top:502.3px" width="6.4" height="5.5" viewBox="0 0 7 6"><path d="M0 0 L7 0 L3.5 6 Z" fill="#727272"/></svg>
<svg class="abs" style="left:33.1px;top:500.3px" width="11.3" height="9.4" viewBox="0 0 12 10"><path d="M0.3 1.6Q0.3 0.6 1.3 0.6H4.6L5.6 1.8H10.8Q11.6 1.8 11.6 2.6V8.6Q11.6 9.5 10.8 9.5H1.2Q0.3 9.5 0.3 8.6Z" fill="url(#fg)"/><path d="M1.2 1.2H4.3L5 2.2H1.2Z" fill="#e6ebea"/><path d="M0.8 3.3H11.1" stroke="#c7cfcd" stroke-width="0.9"/></svg>
<div class="t tr" style="left:47px;top:498.8px;">Prefabs</div>
<svg class="abs" style="left:36.2px;top:514.3px" width="5.5" height="6.4" viewBox="0 0 6 7"><path d="M0 0 L6 3.5 L0 7 Z" fill="#7d7d7d"/></svg>
<svg class="abs" style="left:44.1px;top:512.3px" width="11.3" height="9.4" viewBox="0 0 12 10"><path d="M0.3 1.6Q0.3 0.6 1.3 0.6H4.6L5.6 1.8H10.8Q11.6 1.8 11.6 2.6V8.6Q11.6 9.5 10.8 9.5H1.2Q0.3 9.5 0.3 8.6Z" fill="url(#fg)"/><path d="M1.2 1.2H4.3L5 2.2H1.2Z" fill="#e6ebea"/><path d="M0.8 3.3H11.1" stroke="#c7cfcd" stroke-width="0.9"/></svg>
<div class="t tr" style="left:58px;top:511.0px;">Enemies</div>
<svg class="abs" style="left:36.2px;top:526.3px" width="5.5" height="6.4" viewBox="0 0 6 7"><path d="M0 0 L6 3.5 L0 7 Z" fill="#7d7d7d"/></svg>
<svg class="abs" style="left:44.1px;top:524.3px" width="11.3" height="9.4" viewBox="0 0 12 10"><path d="M0.3 1.6Q0.3 0.6 1.3 0.6H4.6L5.6 1.8H10.8Q11.6 1.8 11.6 2.6V8.6Q11.6 9.5 10.8 9.5H1.2Q0.3 9.5 0.3 8.6Z" fill="url(#fg)"/><path d="M1.2 1.2H4.3L5 2.2H1.2Z" fill="#e6ebea"/><path d="M0.8 3.3H11.1" stroke="#c7cfcd" stroke-width="0.9"/></svg>
<div class="t tr" style="left:58px;top:523.2px;">Level</div>
<svg class="abs" style="left:36.2px;top:538.3px" width="5.5" height="6.4" viewBox="0 0 6 7"><path d="M0 0 L6 3.5 L0 7 Z" fill="#7d7d7d"/></svg>
<svg class="abs" style="left:44.1px;top:536.3px" width="11.3" height="9.4" viewBox="0 0 12 10"><path d="M0.3 1.6Q0.3 0.6 1.3 0.6H4.6L5.6 1.8H10.8Q11.6 1.8 11.6 2.6V8.6Q11.6 9.5 10.8 9.5H1.2Q0.3 9.5 0.3 8.6Z" fill="url(#fg)"/><path d="M1.2 1.2H4.3L5 2.2H1.2Z" fill="#e6ebea"/><path d="M0.8 3.3H11.1" stroke="#c7cfcd" stroke-width="0.9"/></svg>
<div class="t tr" style="left:58px;top:535.4px;">PBObjects</div>
<svg class="abs" style="left:35.2px;top:551.3px" width="6.4" height="5.5" viewBox="0 0 7 6"><path d="M0 0 L7 0 L3.5 6 Z" fill="#727272"/></svg>
<svg class="abs" style="left:44.1px;top:549.3px" width="11.3" height="9.4" viewBox="0 0 12 10"><path d="M0.3 1.6Q0.3 0.6 1.3 0.6H4.6L5.6 1.8H10.8Q11.6 1.8 11.6 2.6V8.6Q11.6 9.5 10.8 9.5H1.2Q0.3 9.5 0.3 8.6Z" fill="url(#fg)"/><path d="M1.2 1.2H4.3L5 2.2H1.2Z" fill="#e6ebea"/><path d="M0.8 3.3H11.1" stroke="#c7cfcd" stroke-width="0.9"/></svg>
<div class="t tr" style="left:58px;top:547.6px;">Pickups</div>
<svg class="abs" style="left:47.2px;top:562.3px" width="5.5" height="6.4" viewBox="0 0 6 7"><path d="M0 0 L6 3.5 L0 7 Z" fill="#7d7d7d"/></svg>
<svg class="abs" style="left:55.1px;top:561.3px" width="11.3" height="9.4" viewBox="0 0 12 10"><path d="M0.3 1.6Q0.3 0.6 1.3 0.6H4.6L5.6 1.8H10.8Q11.6 1.8 11.6 2.6V8.6Q11.6 9.5 10.8 9.5H1.2Q0.3 9.5 0.3 8.6Z" fill="url(#fg)"/><path d="M1.2 1.2H4.3L5 2.2H1.2Z" fill="#e6ebea"/><path d="M0.8 3.3H11.1" stroke="#c7cfcd" stroke-width="0.9"/></svg>
<div class="t tr" style="left:69px;top:559.8px;">MainScene</div>
<svg class="abs" style="left:55.8px;top:572.9px" width="10.4" height="10.4" viewBox="0 0 12 12"><path d="M6 0.5 L11.5 3 L6 5.8 L0.5 3 Z" fill="#a4d2f6"/><path d="M0.5 3 L6 5.8 L6 11.7 L0.5 9 Z" fill="#5a9fe0"/><path d="M11.5 3 L6 5.8 L6 11.7 L11.5 9 Z" fill="#2f70b8"/></svg>
<svg class="abs" style="left:57px;top:575.4px" width="7.8" height="6" viewBox="0 0 9 7"><path d="M0.5 1L4.5 6.5L8.5 1L6.5 0.5L4.5 3.5L2.5 0.5Z" fill="#1d4f8c"/></svg>
<div class="t tr" style="left:69px;top:572.0px;">Loot_Health</div>
<svg class="abs" style="left:55.8px;top:585.1px" width="10.4" height="10.4" viewBox="0 0 12 12"><path d="M6 0.5 L11.5 3 L6 5.8 L0.5 3 Z" fill="#a4d2f6"/><path d="M0.5 3 L6 5.8 L6 11.7 L0.5 9 Z" fill="#5a9fe0"/><path d="M11.5 3 L6 5.8 L6 11.7 L11.5 9 Z" fill="#2f70b8"/></svg>
<svg class="abs" style="left:57px;top:587.6px" width="7.8" height="6" viewBox="0 0 9 7"><path d="M0.5 1L4.5 6.5L8.5 1L6.5 0.5L4.5 3.5L2.5 0.5Z" fill="#1d4f8c"/></svg>
<div class="t tr" style="left:69px;top:584.2px;">Loot_Jetpack</div>
<svg class="abs" style="left:55.8px;top:597.3px" width="10.4" height="10.4" viewBox="0 0 12 12"><path d="M6 0.5 L11.5 3 L6 5.8 L0.5 3 Z" fill="#a4d2f6"/><path d="M0.5 3 L6 5.8 L6 11.7 L0.5 9 Z" fill="#5a9fe0"/><path d="M11.5 3 L6 5.8 L6 11.7 L11.5 9 Z" fill="#2f70b8"/></svg>
<svg class="abs" style="left:57px;top:599.8px" width="7.8" height="6" viewBox="0 0 9 7"><path d="M0.5 1L4.5 6.5L8.5 1L6.5 0.5L4.5 3.5L2.5 0.5Z" fill="#1d4f8c"/></svg>
<div class="t tr" style="left:69px;top:596.4px;">Loot_Launcher</div>
<svg class="abs" style="left:55.8px;top:609.5px" width="10.4" height="10.4" viewBox="0 0 12 12"><path d="M6 0.5 L11.5 3 L6 5.8 L0.5 3 Z" fill="#a4d2f6"/><path d="M0.5 3 L6 5.8 L6 11.7 L0.5 9 Z" fill="#5a9fe0"/><path d="M11.5 3 L6 5.8 L6 11.7 L11.5 9 Z" fill="#2f70b8"/></svg>
<div class="t tr" style="left:69px;top:608.6px;">Pickup_Blaster</div>
<svg class="abs" style="left:55.8px;top:621.6999999999999px" width="10.4" height="10.4" viewBox="0 0 12 12"><path d="M6 0.5 L11.5 3 L6 5.8 L0.5 3 Z" fill="#a4d2f6"/><path d="M0.5 3 L6 5.8 L6 11.7 L0.5 9 Z" fill="#5a9fe0"/><path d="M11.5 3 L6 5.8 L6 11.7 L11.5 9 Z" fill="#2f70b8"/></svg>
<div class="t tr" style="left:69px;top:620.8px;">Pickup_Health</div>
<svg class="abs" style="left:55.8px;top:633.9px" width="10.4" height="10.4" viewBox="0 0 12 12"><path d="M6 0.5 L11.5 3 L6 5.8 L0.5 3 Z" fill="#a4d2f6"/><path d="M0.5 3 L6 5.8 L6 11.7 L0.5 9 Z" fill="#5a9fe0"/><path d="M11.5 3 L6 5.8 L6 11.7 L11.5 9 Z" fill="#2f70b8"/></svg>
<div class="t tr" style="left:69px;top:633.0px;">Pickup_Jetpack</div>
<svg class="abs" style="left:55.8px;top:646.1px" width="10.4" height="10.4" viewBox="0 0 12 12"><path d="M6 0.5 L11.5 3 L6 5.8 L0.5 3 Z" fill="#a4d2f6"/><path d="M0.5 3 L6 5.8 L6 11.7 L0.5 9 Z" fill="#5a9fe0"/><path d="M11.5 3 L6 5.8 L6 11.7 L11.5 9 Z" fill="#2f70b8"/></svg>
<div class="t tr" style="left:69px;top:645.2px;">Pickup_Launcher</div>
<svg class="abs" style="left:55.8px;top:658.3px" width="10.4" height="10.4" viewBox="0 0 12 12"><path d="M6 0.5 L11.5 3 L6 5.8 L0.5 3 Z" fill="#a4d2f6"/><path d="M0.5 3 L6 5.8 L6 11.7 L0.5 9 Z" fill="#5a9fe0"/><path d="M11.5 3 L6 5.8 L6 11.7 L11.5 9 Z" fill="#2f70b8"/></svg>
<div class="t tr" style="left:69px;top:657.4px;">Pickup_Shotgun</div>
<svg class="abs" style="left:36.2px;top:672.3px" width="5.5" height="6.4" viewBox="0 0 6 7"><path d="M0 0 L6 3.5 L0 7 Z" fill="#7d7d7d"/></svg>
<svg class="abs" style="left:44.1px;top:671.3px" width="11.3" height="9.4" viewBox="0 0 12 10"><path d="M0.3 1.6Q0.3 0.6 1.3 0.6H4.6L5.6 1.8H10.8Q11.6 1.8 11.6 2.6V8.6Q11.6 9.5 10.8 9.5H1.2Q0.3 9.5 0.3 8.6Z" fill="url(#fg)"/><path d="M1.2 1.2H4.3L5 2.2H1.2Z" fill="#e6ebea"/><path d="M0.8 3.3H11.1" stroke="#c7cfcd" stroke-width="0.9"/></svg>
<div class="t tr" style="left:58px;top:669.6px;">Projectiles</div>
<svg class="abs" style="left:36.2px;top:684.3px" width="5.5" height="6.4" viewBox="0 0 6 7"><path d="M0 0 L6 3.5 L0 7 Z" fill="#7d7d7d"/></svg>
<svg class="abs" style="left:44.1px;top:683.3px" width="11.3" height="9.4" viewBox="0 0 12 10"><path d="M0.3 1.6Q0.3 0.6 1.3 0.6H4.6L5.6 1.8H10.8Q11.6 1.8 11.6 2.6V8.6Q11.6 9.5 10.8 9.5H1.2Q0.3 9.5 0.3 8.6Z" fill="url(#fg)"/><path d="M1.2 1.2H4.3L5 2.2H1.2Z" fill="#e6ebea"/><path d="M0.8 3.3H11.1" stroke="#c7cfcd" stroke-width="0.9"/></svg>
<div class="t tr" style="left:58px;top:681.8px;">RootObjects</div>
<svg class="abs" style="left:36.2px;top:696.3px" width="5.5" height="6.4" viewBox="0 0 6 7"><path d="M0 0 L6 3.5 L0 7 Z" fill="#7d7d7d"/></svg>
<svg class="abs" style="left:44.1px;top:695.3px" width="11.3" height="9.4" viewBox="0 0 12 10"><path d="M0.3 1.6Q0.3 0.6 1.3 0.6H4.6L5.6 1.8H10.8Q11.6 1.8 11.6 2.6V8.6Q11.6 9.5 10.8 9.5H1.2Q0.3 9.5 0.3 8.6Z" fill="url(#fg)"/><path d="M1.2 1.2H4.3L5 2.2H1.2Z" fill="#e6ebea"/><path d="M0.8 3.3H11.1" stroke="#c7cfcd" stroke-width="0.9"/></svg>
<div class="t tr" style="left:58px;top:694.0px;">UI</div>
<svg class="abs" style="left:35.2px;top:709.3px" width="6.4" height="5.5" viewBox="0 0 7 6"><path d="M0 0 L7 0 L3.5 6 Z" fill="#727272"/></svg>
<svg class="abs" style="left:44.1px;top:707.3px" width="11.3" height="9.4" viewBox="0 0 12 10"><path d="M0.3 1.6Q0.3 0.6 1.3 0.6H4.6L5.6 1.8H10.8Q11.6 1.8 11.6 2.6V8.6Q11.6 9.5 10.8 9.5H1.2Q0.3 9.5 0.3 8.6Z" fill="url(#fg)"/><path d="M1.2 1.2H4.3L5 2.2H1.2Z" fill="#e6ebea"/><path d="M0.8 3.3H11.1" stroke="#c7cfcd" stroke-width="0.9"/></svg>
<div class="t tr" style="left:58px;top:706.2px;">VFX</div>
<div class="abs" style="left:0;top:717px;width:1024px;height:12px;background:#a2a2a2"></div>
<div class="panel" style="left:620px;top:0;width:403px;height:717px"></div>
<div class="tabbar" style="left:620px;top:0;width:404px;height:11px"></div>
<div class="tab" style="left:621px;top:0;width:65px;height:11px"></div>
<svg class="abs" style="left:626.6px;top:0.9px" width="7.8" height="7.8" viewBox="0 0 9 9"><circle cx="4.5" cy="4.5" r="4" fill="#333"/><rect x="4" y="4" width="1.2" height="3" fill="#ddd"/><rect x="4" y="2" width="1.2" height="1.2" fill="#ddd"/></svg>
<div class="t " style="left:638px;top:-0.5px;">Inspector</div>
<svg class="abs" style="left:693px;top:2px" width="8" height="8" viewBox="0 0 8 8"><path d="M1 1L7 7M7 1L1 7" stroke="#444" stroke-width="1.6"/><rect x="0" y="0" width="2.5" height="2.5" fill="#333"/><rect x="5.5" y="0" width="2.5" height="2.5" fill="#333"/><rect x="0" y="5.5" width="2.5" height="2.5" fill="#333"/><rect x="5.5" y="5.5" width="2.5" height="2.5" fill="#333"/></svg>
<div class="t " style="left:705px;top:-0.5px;color:#363636">Navigation</div>
<svg class="abs" style="left:1002px;top:1.8px" width="19" height="7" viewBox="0 0 19 7"><rect x="0" y="2.8" width="5" height="4" fill="#505050"/><path d="M1 2.8V1.8a1.5 1.5 0 0 1 3 0V2.8" fill="none" stroke="#505050" stroke-width="0.9"/><path d="M8.6 3.2L11 3.2L9.8 4.9Z" fill="#5a5a5a"/><path d="M13.2 2.6h5.6M13.2 4.3h5.6M13.2 6h5.6" stroke="#747474" stroke-width="0.9"/></svg>
<div class="abs" style="left:620px;top:11px;width:403px;height:49px;background:#dedede"></div>
<svg class="abs" style="left:623.6px;top:19.4px" width="18" height="12" viewBox="0 0 18 12"><defs><linearGradient id="yp" x1="0" y1="0" x2="0" y2="1"><stop offset="0" stop-color="#f7e22a"/><stop offset="0.55" stop-color="#eccb16"/><stop offset="1" stop-color="#c79d0c"/></linearGradient></defs><rect x="0.5" y="0.5" width="16.8" height="8.8" rx="4.2" fill="url(#yp)" stroke="#b99a12" stroke-width="0.7"/><path d="M2.4 8.4L4.6 11.6L7 9Z" fill="#3a2c00"/></svg>
<div class="cb on" style="left:653px;top:18px"><svg class="abs" style="left:-1px;top:-2px" width="11" height="11" viewBox="0 0 11 11"><path d="M2 5.5 L4.5 8.5 L9.5 1.5" fill="none" stroke="#0b1c3a" stroke-width="1.8"/></svg></div>
<div class="fld" style="left:666px;top:16.8px;width:300.5px;height:11.6px"></div>
<div class="t b nb" style="left:669px;top:16.5px;">Loot_Launcher</div>
<div class="cb " style="left:971px;top:18px"></div>
<div class="t " style="left:983px;top:16.5px;">Static</div>
<svg class="abs" style="left:1011.3px;top:20.4px" width="7" height="3.6" viewBox="0 0 7 4"><path d="M0 0L7 0L3.5 4Z" fill="#333"/></svg>
<div class="t " style="left:646px;top:32px;">Tag</div>
<div class="dd" style="left:665.9px;top:32.6px;width:165.5px"></div>
<div class="t " style="left:671px;top:32px;font-size:8.5px">Untagged</div>
<div class="t " style="left:835px;top:32px;">Layer</div>
<div class="dd" style="left:865.5px;top:32.6px;width:153.3px"></div>
<div class="t " style="left:870px;top:32px;font-size:8.5px">Default</div>
<svg class="abs" style="left:824px;top:35px" width="3" height="6" viewBox="0 0 3 6"><path d="M0 2.2L3 2.2L1.5 0ZM0 3.8L3 3.8L1.5 6Z" fill="#333"/></svg>
<svg class="abs" style="left:1012px;top:35px" width="3" height="6" viewBox="0 0 3 6"><path d="M0 2.2L3 2.2L1.5 0ZM0 3.8L3 3.8L1.5 6Z" fill="#333"/></svg>
<div class="t " style="left:633px;top:45.5px;">Prefab</div>
<div class="btn" style="left:665.9px;top:46.2px;width:106px;height:10.6px;border-radius:3px 0 0 3px"></div>
<div class="btn" style="left:771px;top:46.2px;width:108.8px;height:10.6px;border-radius:0 3px 3px 0"></div>
<div class="dd" style="left:891.5px;top:46.2px;width:127.3px;height:10.6px"></div>
<div class="t " style="left:708px;top:45.5px;font-size:8.5px">Open</div>
<div class="t " style="left:813px;top:45.5px;font-size:8.5px">Select</div>
<div class="t " style="left:897px;top:45.5px;font-size:8.5px">Overrides</div>
<svg class="abs" style="left:1011px;top:50px" width="4" height="3" viewBox="0 0 4 3"><path d="M0 0L4 0L2 3Z" fill="#444"/></svg>
<div class="sep" style="top:60px"></div>
<svg class="abs" style="left:623.2px;top:64.9px" width="6.4" height="5.5" viewBox="0 0 7 6"><path d="M0 0 L7 0 L3.5 6 Z" fill="#868686"/></svg>
<svg class="abs" style="left:632px;top:61.5px" width="14" height="12" viewBox="0 0 14 12"><path d="M5.3 7L5.8 2" stroke="#8fd04a" stroke-width="2" stroke-linecap="round"/><path d="M5.3 7L0.8 10" stroke="#3a9ad8" stroke-width="2" stroke-linecap="round"/><path d="M5.3 7L10.8 9.8" stroke="#c8324a" stroke-width="2" stroke-linecap="round"/></svg>
<div class="t b" style="left:657px;top:61.5px;">Transform</div>
<svg class="abs" style="left:983.2px;top:62.2px" width="10.8" height="10.8" viewBox="0 0 11 11"><rect x="0.5" y="0.5" width="10" height="10" rx="2" fill="url(#hb)" stroke="#39557f" stroke-width="0.9"/><path d="M3.2 2.2H8V8.6H3.2Z" fill="#b4c6e0" opacity=".85"/><path d="M4.6 4.2Q4.6 3.2 5.6 3.2Q6.7 3.2 6.7 4.2Q6.7 5 5.7 5.4V6.2M5.7 7.2V7.9" stroke="#f2f6fb" stroke-width="0.9" fill="none"/></svg>
<svg class="abs" style="left:998.6px;top:63.5px" width="9" height="8.4" viewBox="0 0 9 8.4"><path d="M0.3 2.2H5M7.6 2.2H8.8M0.3 6H2M4.6 6H8.8" stroke="#3a3a3a" stroke-width="1.1"/><rect x="5.6" y="0.2" width="1.5" height="4" fill="#2e2e2e"/><rect x="2.6" y="4" width="1.5" height="4" fill="#2e2e2e"/></svg>
<svg class="abs" style="left:1011.6px;top:63.1px" width="11" height="9" viewBox="0 0 11 9"><g transform="translate(4,3.9)"><path d="M0 -3.9V3.9M-3.9 0H3.9M-2.75 -2.75L2.75 2.75M2.75 -2.75L-2.75 2.75" stroke="#2f2f2f" stroke-width="1.5"/><circle r="2.7" fill="#2f2f2f"/><circle r="1.25" fill="#c2c2c2"/></g><path d="M8.2 5.2L10.8 5.2L9.5 7.4Z" fill="#2f2f2f"/></svg>
<div class="t b" style="left:631px;top:75px;">Position</div>
<div class="t b" style="left:783px;top:75px;">X</div>
<div class="fld" style="left:791px;top:74.6px;width:68px"></div>
<div class="t b" style="left:794px;top:75px;">0</div>
<div class="t b" style="left:863px;top:75px;">Y</div>
<div class="fld" style="left:871px;top:74.6px;width:68px"></div>
<div class="t b" style="left:874px;top:75px;">0</div>
<div class="t b" style="left:943px;top:75px;">Z</div>
<div class="fld" style="left:951px;top:74.6px;width:69px"></div>
<div class="t b" style="left:954px;top:75px;">0</div>
<div class="t b" style="left:631px;top:88.5px;">Rotation</div>
<div class="t b" style="left:783px;top:88.5px;">X</div>
<div class="fld" style="left:791px;top:88.1px;width:68px"></div>
<div class="t b" style="left:794px;top:88.5px;">0</div>
<div class="t b" style="left:863px;top:88.5px;">Y</div>
<div class="fld" style="left:871px;top:88.1px;width:68px"></div>
<div class="t b" style="left:874px;top:88.5px;">0</div>
<div class="t b" style="left:943px;top:88.5px;">Z</div>
<div class="fld" style="left:951px;top:88.1px;width:69px"></div>
<div class="t b" style="left:954px;top:88.5px;">0</div>
<div class="t " style="left:631px;top:102px;">Scale</div>
<div class="t " style="left:783px;top:102px;">X</div>
<div class="fld" style="left:791px;top:101.6px;width:68px"></div>
<div class="t " style="left:794px;top:102px;">1</div>
<div class="t " style="left:863px;top:102px;">Y</div>
<div class="fld" style="left:871px;top:101.6px;width:68px"></div>
<div class="t " style="left:874px;top:102px;">1</div>
<div class="t " style="left:943px;top:102px;">Z</div>
<div class="fld" style="left:951px;top:101.6px;width:69px"></div>
<div class="t " style="left:954px;top:102px;">1</div>
<div class="sep" style="top:116.6px"></div>
<svg class="abs" style="left:623.2px;top:122.4px" width="6.4" height="5.5" viewBox="0 0 7 6"><path d="M0 0 L7 0 L3.5 6 Z" fill="#868686"/></svg>
<svg class="abs" style="left:632px;top:119.7px" width="10.6" height="10.6" viewBox="0 0 12 12"><path d="M6 0.5 L11.5 3 L6 5.8 L0.5 3 Z" fill="#b6e07a"/><path d="M0.5 3 L6 5.8 L6 11.7 L0.5 9 Z" fill="#7cb83c"/><path d="M11.5 3 L6 5.8 L6 11.7 L11.5 9 Z" fill="#5a9426"/></svg>
<div class="cb on" style="left:646px;top:120px"><svg class="abs" style="left:-1px;top:-2px" width="11" height="11" viewBox="0 0 11 11"><path d="M2 5.5 L4.5 8.5 L9.5 1.5" fill="none" stroke="#0b1c3a" stroke-width="1.8"/></svg></div>
<div class="t b" style="left:657px;top:119px;">Box Collider</div>
<svg class="abs" style="left:983.2px;top:119.7px" width="10.8" height="10.8" viewBox="0 0 11 11"><rect x="0.5" y="0.5" width="10" height="10" rx="2" fill="url(#hb)" stroke="#39557f" stroke-width="0.9"/><path d="M3.2 2.2H8V8.6H3.2Z" fill="#b4c6e0" opacity=".85"/><path d="M4.6 4.2Q4.6 3.2 5.6 3.2Q6.7 3.2 6.7 4.2Q6.7 5 5.7 5.4V6.2M5.7 7.2V7.9" stroke="#f2f6fb" stroke-width="0.9" fill="none"/></svg>
<svg class="abs" style="left:998.6px;top:121px" width="9" height="8.4" viewBox="0 0 9 8.4"><path d="M0.3 2.2H5M7.6 2.2H8.8M0.3 6H2M4.6 6H8.8" stroke="#3a3a3a" stroke-width="1.1"/><rect x="5.6" y="0.2" width="1.5" height="4" fill="#2e2e2e"/><rect x="2.6" y="4" width="1.5" height="4" fill="#2e2e2e"/></svg>
<svg class="abs" style="left:1011.6px;top:120.6px" width="11" height="9" viewBox="0 0 11 9"><g transform="translate(4,3.9)"><path d="M0 -3.9V3.9M-3.9 0H3.9M-2.75 -2.75L2.75 2.75M2.75 -2.75L-2.75 2.75" stroke="#2f2f2f" stroke-width="1.5"/><circle r="2.7" fill="#2f2f2f"/><circle r="1.25" fill="#c2c2c2"/></g><path d="M8.2 5.2L10.8 5.2L9.5 7.4Z" fill="#2f2f2f"/></svg>
<div class="btn" style="left:781px;top:133.3px;width:24.8px;height:17.2px;border-radius:3px"></div>
<svg class="abs" style="left:787.6px;top:137.4px" width="12" height="10" viewBox="0 0 12 10"><path d="M1.8 8.2L5.2 1.8L6.6 1.8L9.6 6" fill="none" stroke="#222" stroke-width="1.1"/><rect x="0.6" y="7" width="2.4" height="2.4" fill="#eee" stroke="#222" stroke-width="0.9"/><rect x="4.7" y="0.6" width="2.4" height="2.4" fill="#eee" stroke="#222" stroke-width="0.9"/><rect x="8" y="4.6" width="3.2" height="3.2" rx="0.8" fill="#9a9a9a" stroke="#222" stroke-width="0.9"/></svg>
<div class="t " style="left:812px;top:136.2px;color:#303030;font-size:10px;transform:none">Edit Collider</div>
<div class="t " style="left:631px;top:154px;">Is Trigger</div>
<div class="cb on" style="left:782px;top:155px"><svg class="abs" style="left:-1px;top:-2px" width="11" height="11" viewBox="0 0 11 11"><path d="M2 5.5 L4.5 8.5 L9.5 1.5" fill="none" stroke="#0b1c3a" stroke-width="1.8"/></svg></div>
<div class="t " style="left:631px;top:168px;">Material</div>
<div class="fld" style="left:781px;top:167.6px;width:224px"></div>
<div class="t " style="left:783.2px;top:167.7px;">None (Physic Material)</div>
<svg class="abs" style="left:1012px;top:170.5px" width="7" height="7" viewBox="0 0 7 7"><circle cx="3.5" cy="3.5" r="2.7" fill="none" stroke="#555" stroke-width="1"/><circle cx="3.5" cy="3.5" r="0.9" fill="#555"/></svg>
<div class="t " style="left:631px;top:181.5px;">Center</div>
<div class="t " style="left:783px;top:181.5px;">X</div>
<div class="fld" style="left:791px;top:181.1px;width:68px"></div>
<div class="t " style="left:794px;top:181.5px;">0</div>
<div class="t " style="left:863px;top:181.5px;">Y</div>
<div class="fld" style="left:871px;top:181.1px;width:68px"></div>
<div class="t " style="left:874px;top:181.5px;">0.5</div>
<div class="t " style="left:943px;top:181.5px;">Z</div>
<div class="fld" style="left:951px;top:181.1px;width:69px"></div>
<div class="t " style="left:954px;top:181.5px;">0</div>
<div class="t " style="left:631px;top:195px;">Size</div>
<div class="t " style="left:783px;top:195px;">X</div>
<div class="fld" style="left:791px;top:194.6px;width:68px"></div>
<div class="t " style="left:794px;top:195px;">1</div>
<div class="t " style="left:863px;top:195px;">Y</div>
<div class="fld" style="left:871px;top:194.6px;width:68px"></div>
<div class="t " style="left:874px;top:195px;">1</div>
<div class="t " style="left:943px;top:195px;">Z</div>
<div class="fld" style="left:951px;top:194.6px;width:69px"></div>
<div class="t " style="left:954px;top:195px;">1</div>
<div class="sep" style="top:209.6px"></div>
<svg class="abs" style="left:623.2px;top:215.4px" width="6.4" height="5.5" viewBox="0 0 7 6"><path d="M0 0 L7 0 L3.5 6 Z" fill="#868686"/></svg>
<svg class="abs" style="left:632px;top:212.5px" width="11" height="10" viewBox="0 0 11 10"><path d="M4.2 4.5L1 8.6" stroke="#3f8ed0" stroke-width="1.6" stroke-linecap="round"/><path d="M5.8 4.5L9.2 8.4" stroke="#cf3a3a" stroke-width="1.6" stroke-linecap="round"/><path d="M5 0.3L7.6 6.8H2.4Z" fill="#a9a81f"/><circle cx="5" cy="4.4" r="2.3" fill="#e6d51c"/><circle cx="4.5" cy="3.8" r="1" fill="#f8f07a"/></svg>
<div class="t b" style="left:657px;top:212px;">Rigidbody</div>
<svg class="abs" style="left:983.2px;top:212.7px" width="10.8" height="10.8" viewBox="0 0 11 11"><rect x="0.5" y="0.5" width="10" height="10" rx="2" fill="url(#hb)" stroke="#39557f" stroke-width="0.9"/><path d="M3.2 2.2H8V8.6H3.2Z" fill="#b4c6e0" opacity=".85"/><path d="M4.6 4.2Q4.6 3.2 5.6 3.2Q6.7 3.2 6.7 4.2Q6.7 5 5.7 5.4V6.2M5.7 7.2V7.9" stroke="#f2f6fb" stroke-width="0.9" fill="none"/></svg>
<svg class="abs" style="left:998.6px;top:214px" width="9" height="8.4" viewBox="0 0 9 8.4"><path d="M0.3 2.2H5M7.6 2.2H8.8M0.3 6H2M4.6 6H8.8" stroke="#3a3a3a" stroke-width="1.1"/><rect x="5.6" y="0.2" width="1.5" height="4" fill="#2e2e2e"/><rect x="2.6" y="4" width="1.5" height="4" fill="#2e2e2e"/></svg>
<svg class="abs" style="left:1011.6px;top:213.6px" width="11" height="9" viewBox="0 0 11 9"><g transform="translate(4,3.9)"><path d="M0 -3.9V3.9M-3.9 0H3.9M-2.75 -2.75L2.75 2.75M2.75 -2.75L-2.75 2.75" stroke="#2f2f2f" stroke-width="1.5"/><circle r="2.7" fill="#2f2f2f"/><circle r="1.25" fill="#c2c2c2"/></g><path d="M8.2 5.2L10.8 5.2L9.5 7.4Z" fill="#2f2f2f"/></svg>
<div class="t " style="left:631px;top:225px;">Mass</div>
<div class="fld" style="left:781px;top:224.6px;width:239px"></div>
<div class="t " style="left:783.2px;top:224.7px;">1</div>
<div class="t " style="left:631px;top:238.5px;">Drag</div>
<div class="fld" style="left:781px;top:238.1px;width:239px"></div>
<div class="t " style="left:783.2px;top:238.2px;">0</div>
<div class="t " style="left:631px;top:252px;">Angular Drag</div>
<div class="fld" style="left:781px;top:251.6px;width:239px"></div>
<div class="t " style="left:783.2px;top:251.7px;">0.05</div>
<div class="t " style="left:631px;top:266px;">Use Gravity</div>
<div class="cb " style="left:782px;top:267px"></div>
<div class="t " style="left:631px;top:279.5px;">Is Kinematic</div>
<div class="cb on" style="left:782px;top:281px"><svg class="abs" style="left:-1px;top:-2px" width="11" height="11" viewBox="0 0 11 11"><path d="M2 5.5 L4.5 8.5 L9.5 1.5" fill="none" stroke="#0b1c3a" stroke-width="1.8"/></svg></div>
<div class="t " style="left:631px;top:293px;">Interpolate</div>
<div class="dd" style="left:781.2px;top:293.5px;width:238.5px"></div>
<div class="t " style="left:787px;top:293px;font-size:8.5px">None</div>
<svg class="abs" style="left:1013px;top:296px" width="3" height="6" viewBox="0 0 3 6"><path d="M0 2.2L3 2.2L1.5 0ZM0 3.8L3 3.8L1.5 6Z" fill="#333"/></svg>
<div class="t " style="left:631px;top:307px;">Collision Detection</div>
<div class="dd" style="left:781.2px;top:307.5px;width:238.5px"></div>
<div class="t " style="left:787px;top:307px;font-size:8.5px">Discrete</div>
<svg class="abs" style="left:1013px;top:310px" width="3" height="6" viewBox="0 0 3 6"><path d="M0 2.2L3 2.2L1.5 0ZM0 3.8L3 3.8L1.5 6Z" fill="#333"/></svg>
<svg class="abs" style="left:624px;top:323.3px" width="5.5" height="6.4" viewBox="0 0 6 7"><path d="M0 0 L6 3.5 L0 7 Z" fill="#868686"/></svg>
<div class="t " style="left:631px;top:320.5px;">Constraints</div>
<div class="sep" style="top:335.4px"></div>
<svg class="abs" style="left:623.2px;top:341.4px" width="6.4" height="5.5" viewBox="0 0 7 6"><path d="M0 0 L7 0 L3.5 6 Z" fill="#868686"/></svg>
<svg class="abs" style="left:632.8px;top:338.6px" width="8" height="10.6" viewBox="0 0 8 10.6"><path d="M0.3 0.3H5.6L7.7 2.4V10.3H0.3Z" fill="#e9edf2" stroke="#d0d5dc" stroke-width="0.5"/><text x="0.9" y="7.4" font-size="5.2" font-family="Liberation Sans" fill="#4a6cb8" font-weight="bold" textLength="6.2" lengthAdjust="spacingAndGlyphs">c#</text></svg>
<div class="cb on" style="left:646px;top:339px"><svg class="abs" style="left:-1px;top:-2px" width="11" height="11" viewBox="0 0 11 11"><path d="M2 5.5 L4.5 8.5 L9.5 1.5" fill="none" stroke="#0b1c3a" stroke-width="1.8"/></svg></div>
<div class="t b" style="left:657px;top:338px;">Pickup (Script)</div>
<svg class="abs" style="left:983.2px;top:338.7px" width="10.8" height="10.8" viewBox="0 0 11 11"><rect x="0.5" y="0.5" width="10" height="10" rx="2" fill="url(#hb)" stroke="#39557f" stroke-width="0.9"/><path d="M3.2 2.2H8V8.6H3.2Z" fill="#b4c6e0" opacity=".85"/><path d="M4.6 4.2Q4.6 3.2 5.6 3.2Q6.7 3.2 6.7 4.2Q6.7 5 5.7 5.4V6.2M5.7 7.2V7.9" stroke="#f2f6fb" stroke-width="0.9" fill="none"/></svg>
<svg class="abs" style="left:998.6px;top:340px" width="9" height="8.4" viewBox="0 0 9 8.4"><path d="M0.3 2.2H5M7.6 2.2H8.8M0.3 6H2M4.6 6H8.8" stroke="#3a3a3a" stroke-width="1.1"/><rect x="5.6" y="0.2" width="1.5" height="4" fill="#2e2e2e"/><rect x="2.6" y="4" width="1.5" height="4" fill="#2e2e2e"/></svg>
<svg class="abs" style="left:1011.6px;top:339.6px" width="11" height="9" viewBox="0 0 11 9"><g transform="translate(4,3.9)"><path d="M0 -3.9V3.9M-3.9 0H3.9M-2.75 -2.75L2.75 2.75M2.75 -2.75L-2.75 2.75" stroke="#2f2f2f" stroke-width="1.5"/><circle r="2.7" fill="#2f2f2f"/><circle r="1.25" fill="#c2c2c2"/></g><path d="M8.2 5.2L10.8 5.2L9.5 7.4Z" fill="#2f2f2f"/></svg>
<div class="t gray" style="left:631px;top:351px;">Script</div>
<div class="fld dis" style="left:781px;top:350.6px;width:224px"></div>
<svg class="abs" style="left:784.4px;top:353.6px;opacity:.45" width="6.5" height="6.8" viewBox="0 0 7 7"><rect width="7" height="7" rx="0.8" fill="#e6eaf0"/><rect x="1.6" y="2.6" width="3.8" height="1.8" fill="#7f9fd2"/></svg>
<div class="t gray" style="left:794px;top:350.7px;">Pickup</div>
<svg class="abs" style="left:1012px;top:353.5px" width="7" height="7" viewBox="0 0 7 7"><circle cx="3.5" cy="3.5" r="2.7" fill="none" stroke="#aaa" stroke-width="1"/><circle cx="3.5" cy="3.5" r="0.9" fill="#aaa"/></svg>
<div class="t " style="left:631px;top:364.5px;">Vertical Bob Frequency</div>
<div class="fld" style="left:781px;top:364.1px;width:239px"></div>
<div class="t " style="left:783.2px;top:364.2px;">1</div>
<div class="t " style="left:631px;top:378px;">Bobbing Amount</div>
<div class="fld" style="left:781px;top:377.6px;width:239px"></div>
<div class="t " style="left:783.2px;top:377.7px;">0.3</div>
<div class="t " style="left:631px;top:392px;">Rotating Speed</div>
<div class="fld" style="left:781px;top:391.6px;width:239px"></div>
<div class="t " style="left:783.2px;top:391.7px;">360</div>
<div class="t " style="left:631px;top:405.5px;">Pickup SFX</div>
<div class="fld" style="left:781px;top:405.1px;width:224px"></div>
<svg class="abs" style="left:783.6px;top:407.3px" width="8.2" height="8.2" viewBox="0 0 9 9"><circle cx="4.5" cy="4.5" r="4.1" fill="#e5901c"/><path d="M0.8 4.5h7.4" stroke="#f6c35a" stroke-width="1.3"/><path d="M2 2.6h5M2 6.4h5" stroke="#f0a838" stroke-width="0.8"/></svg>
<div class="t " style="left:793px;top:405.2px;">Pickup_Weapon_Medium</div>
<svg class="abs" style="left:1012px;top:408.0px" width="7" height="7" viewBox="0 0 7 7"><circle cx="3.5" cy="3.5" r="2.7" fill="none" stroke="#555" stroke-width="1"/><circle cx="3.5" cy="3.5" r="0.9" fill="#555"/></svg>
<div class="t " style="left:631px;top:419px;">Pickup VFX Prefab</div>
<div class="fld" style="left:781px;top:418.6px;width:224px"></div>
<div class="t " style="left:783.2px;top:418.7px;">None (Game Object)</div>
<svg class="abs" style="left:1012px;top:421.5px" width="7" height="7" viewBox="0 0 7 7"><circle cx="3.5" cy="3.5" r="2.7" fill="none" stroke="#555" stroke-width="1"/><circle cx="3.5" cy="3.5" r="0.9" fill="#555"/></svg>
<div class="sep" style="top:433.9px"></div>
<svg class="abs" style="left:623.2px;top:439.4px" width="6.4" height="5.5" viewBox="0 0 7 6"><path d="M0 0 L7 0 L3.5 6 Z" fill="#868686"/></svg>
<svg class="abs" style="left:632.8px;top:436.6px" width="8" height="10.6" viewBox="0 0 8 10.6"><path d="M0.3 0.3H5.6L7.7 2.4V10.3H0.3Z" fill="#e9edf2" stroke="#d0d5dc" stroke-width="0.5"/><text x="0.9" y="7.4" font-size="5.2" font-family="Liberation Sans" fill="#4a6cb8" font-weight="bold" textLength="6.2" lengthAdjust="spacingAndGlyphs">c#</text></svg>
<div class="cb on" style="left:646px;top:437px"><svg class="abs" style="left:-1px;top:-2px" width="11" height="11" viewBox="0 0 11 11"><path d="M2 5.5 L4.5 8.5 L9.5 1.5" fill="none" stroke="#0b1c3a" stroke-width="1.8"/></svg></div>
<div class="t b" style="left:657px;top:436px;">Weapon Pickup (Script)</div>
<svg class="abs" style="left:983.2px;top:436.7px" width="10.8" height="10.8" viewBox="0 0 11 11"><rect x="0.5" y="0.5" width="10" height="10" rx="2" fill="url(#hb)" stroke="#39557f" stroke-width="0.9"/><path d="M3.2 2.2H8V8.6H3.2Z" fill="#b4c6e0" opacity=".85"/><path d="M4.6 4.2Q4.6 3.2 5.6 3.2Q6.7 3.2 6.7 4.2Q6.7 5 5.7 5.4V6.2M5.7 7.2V7.9" stroke="#f2f6fb" stroke-width="0.9" fill="none"/></svg>
<svg class="abs" style="left:998.6px;top:438px" width="9" height="8.4" viewBox="0 0 9 8.4"><path d="M0.3 2.2H5M7.6 2.2H8.8M0.3 6H2M4.6 6H8.8" stroke="#3a3a3a" stroke-width="1.1"/><rect x="5.6" y="0.2" width="1.5" height="4" fill="#2e2e2e"/><rect x="2.6" y="4" width="1.5" height="4" fill="#2e2e2e"/></svg>
<svg class="abs" style="left:1011.6px;top:437.6px" width="11" height="9" viewBox="0 0 11 9"><g transform="translate(4,3.9)"><path d="M0 -3.9V3.9M-3.9 0H3.9M-2.75 -2.75L2.75 2.75M2.75 -2.75L-2.75 2.75" stroke="#2f2f2f" stroke-width="1.5"/><circle r="2.7" fill="#2f2f2f"/><circle r="1.25" fill="#c2c2c2"/></g><path d="M8.2 5.2L10.8 5.2L9.5 7.4Z" fill="#2f2f2f"/></svg>
<div class="t gray" style="left:631px;top:449.5px;">Script</div>
<div class="fld dis" style="left:781px;top:449.1px;width:224px"></div>
<svg class="abs" style="left:784.4px;top:452.1px;opacity:.45" width="6.5" height="6.8" viewBox="0 0 7 7"><rect width="7" height="7" rx="0.8" fill="#e6eaf0"/><rect x="1.6" y="2.6" width="3.8" height="1.8" fill="#7f9fd2"/></svg>
<div class="t gray" style="left:794px;top:449.2px;">WeaponPickup</div>
<svg class="abs" style="left:1012px;top:452.0px" width="7" height="7" viewBox="0 0 7 7"><circle cx="3.5" cy="3.5" r="2.7" fill="none" stroke="#aaa" stroke-width="1"/><circle cx="3.5" cy="3.5" r="0.9" fill="#aaa"/></svg>
<div class="t " style="left:631px;top:463px;">Weapon Prefab</div>
<div class="fld" style="left:781px;top:462.6px;width:224px"></div>
<svg class="abs" style="left:784.4px;top:465.6px;opacity:1" width="6.5" height="6.8" viewBox="0 0 7 7"><rect width="7" height="7" rx="0.8" fill="#e6eaf0"/><rect x="1.6" y="2.6" width="3.8" height="1.8" fill="#7f9fd2"/></svg>
<div class="t " style="left:794px;top:462.7px;">Weapon_Launcher (WeaponController)</div>
<svg class="abs" style="left:1012px;top:465.5px" width="7" height="7" viewBox="0 0 7 7"><circle cx="3.5" cy="3.5" r="2.7" fill="none" stroke="#555" stroke-width="1"/><circle cx="3.5" cy="3.5" r="0.9" fill="#555"/></svg>
<div class="sep" style="top:477.4px"></div>
<div class="btn" style="left:732px;top:484px;width:175px;height:18px;border-radius:3px"></div>
<div class="t " style="left:779px;top:487px;font-size:11px;color:#333">Add Component</div>
</div></body></html>
